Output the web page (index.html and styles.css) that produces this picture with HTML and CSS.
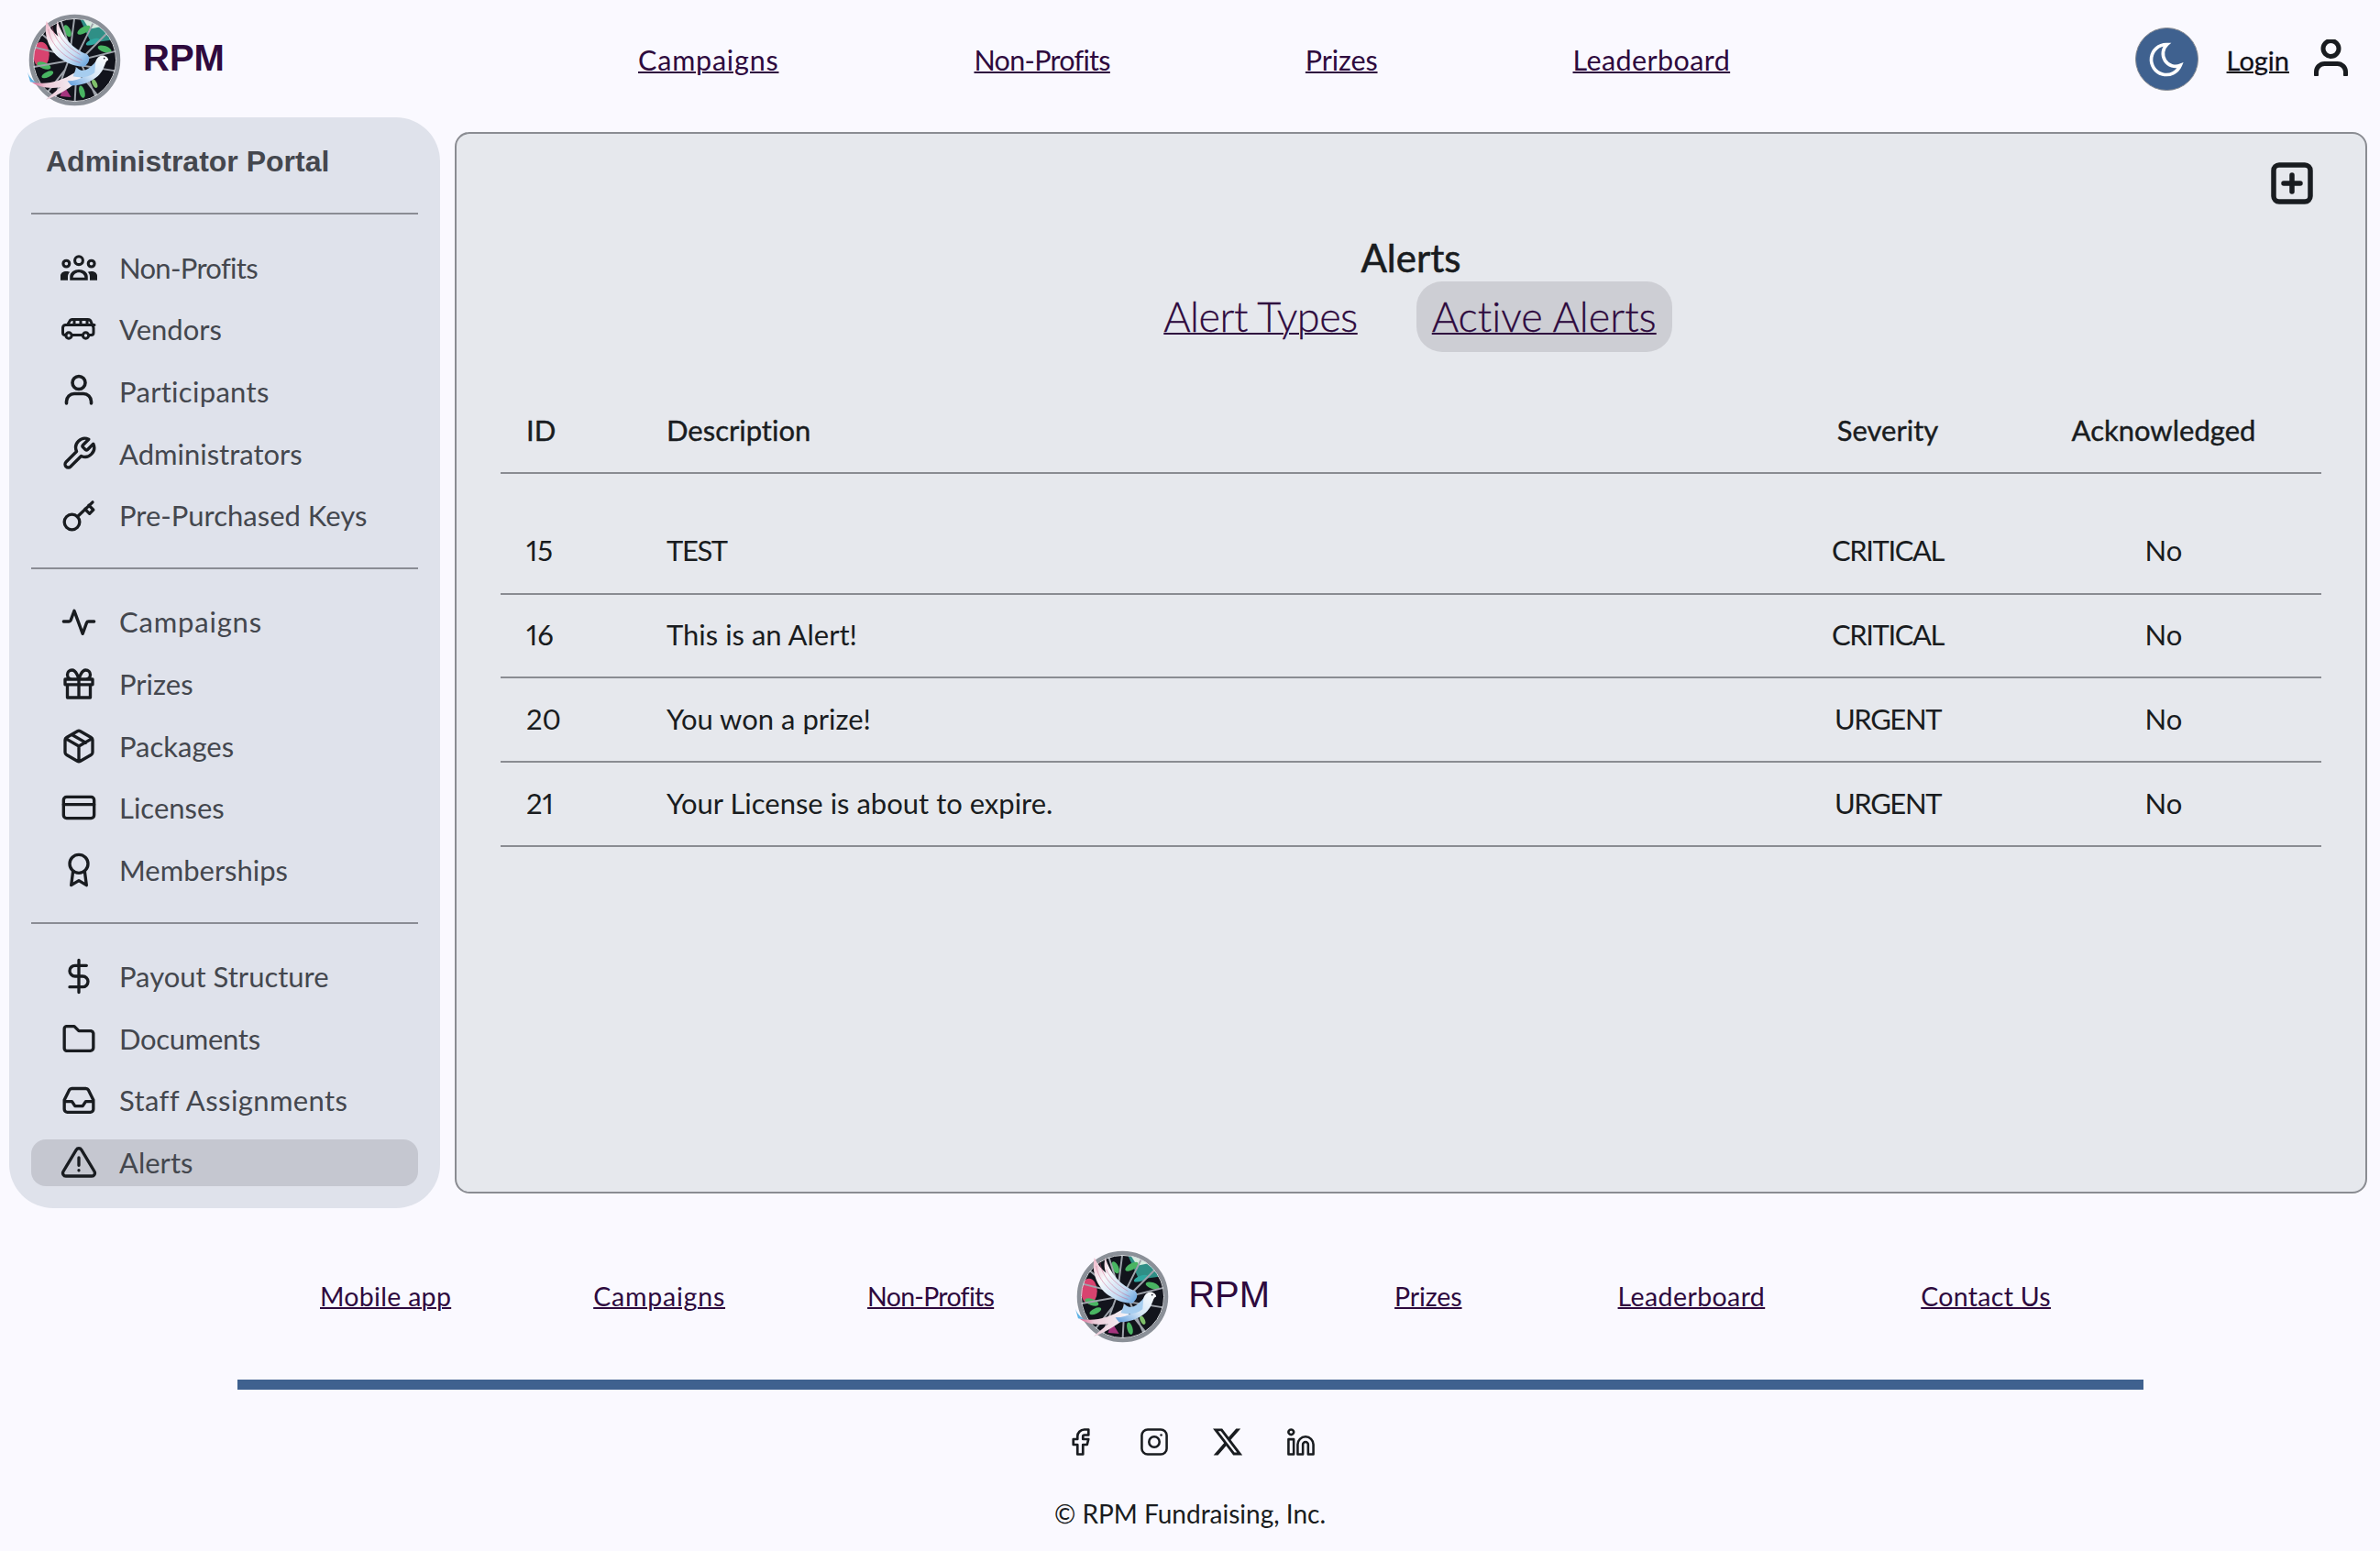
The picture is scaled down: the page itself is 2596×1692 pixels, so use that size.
FILE: index.html
```html
<!DOCTYPE html>
<html lang="en">
<head>
<meta charset="utf-8">
<title>RPM - Alerts</title>
<link rel="stylesheet" href="styles.css">
</head>
<body>
<svg class="defs" aria-hidden="true">
  <defs>
    <linearGradient id="wingGrad" x1="0" y1="0" x2="1" y2="1">
      <stop offset="0" stop-color="#f0b4c6"/>
      <stop offset=".35" stop-color="#f7f9fc"/>
      <stop offset=".7" stop-color="#c4dcf3"/>
      <stop offset="1" stop-color="#5f9fdd"/>
    </linearGradient>
    <linearGradient id="bodyGrad" x1="1" y1="0" x2="0" y2="1">
      <stop offset="0" stop-color="#ffffff"/>
      <stop offset=".55" stop-color="#d5e6f6"/>
      <stop offset="1" stop-color="#5c9bdc"/>
    </linearGradient>
    <linearGradient id="tailGrad" x1="1" y1="0" x2="0" y2="0">
      <stop offset="0" stop-color="#f5f7fa"/>
      <stop offset=".7" stop-color="#eccbd8"/>
      <stop offset="1" stop-color="#d8608f"/>
    </linearGradient>
    <symbol id="logo" viewBox="0 0 104 104">
      <circle cx="52" cy="52" r="49.500" fill="#12141c"/>
      <ellipse cx="15" cy="46" rx="9" ry="14" fill="#d8436f"/>
      <path d="M58 7C74 9 86 17 92 30L70 33Z" fill="#2f8f86"/>
      <path d="M60 5C70 6 78 10 83 15L68 18Z" fill="#d5ecdf"/>
      <g fill="#49b562">
        <ellipse cx="44" cy="20" rx="3.500" ry="7" transform="rotate(-25 44 20)"/>
        <ellipse cx="62" cy="19" rx="8" ry="3.500" transform="rotate(-30 62 19)"/>
        <ellipse cx="85" cy="40" rx="8" ry="3.500" transform="rotate(20 85 40)"/>
        <ellipse cx="72" cy="32" rx="8" ry="3" fill="#2fa7a0" transform="rotate(-20 72 32)"/>
        <ellipse cx="18" cy="58" rx="8" ry="3.500" transform="rotate(20 18 58)"/>
        <ellipse cx="22" cy="68" rx="7" ry="3" transform="rotate(-25 22 68)"/>
        <ellipse cx="60" cy="87" rx="3" ry="7" transform="rotate(-15 60 87)"/>
        <ellipse cx="74" cy="78" rx="2.500" ry="5" fill="#7fc06a" transform="rotate(-25 74 78)"/>
      </g>
      <path d="M40 80L48 93 36 92Z" fill="#a5347e"/>
      <g stroke="#9ea3ab" stroke-width="2" fill="none">
        <path d="M52 3L46 50 30 94M14 22L50 52 4 60M90 20L58 52 98 42M97 64L60 58 76 94M52 100L54 62 78 92M20 90L42 62M8 38L40 46M36 6L48 44M74 8L56 44"/>
      </g>
      <circle cx="52" cy="52" r="48" fill="none" stroke="#8b9098" stroke-width="4.500"/>
      <circle cx="52" cy="52" r="45.500" fill="none" stroke="#d7dade" stroke-width="1"/>
      <path d="M4 76C20 80 36 76 52 66L60 72C48 82 36 90 20 96 26 90 32 86 36 82 24 84 12 82 4 76Z" fill="url(#tailGrad)"/>
      <path d="M-1 62C1 70 5 74 10 77L3 76Z" fill="#5db4e6"/>
      <path d="M21 9C17 26 25 44 39 52 47 57 56 60 63 59 69 54 69 49 66 46 50 40 38 26 33 9 31 16 32 22 34 26 29 22 24 16 21 9Z" fill="url(#wingGrad)"/>
      <path d="M27 14C29 30 44 46 60 52M34 22C38 32 48 40 58 46M23 18C25 34 40 50 58 55" fill="none" stroke="#c9577f" stroke-width=".9" opacity=".5"/>
      <path d="M44 75C60 75 70 66 74 56 76 50 79 46 84 47 87 48 89 50 89 52 86 53 86 56 84 60 80 71 66 80 48 80Z" fill="url(#bodyGrad)"/>
      <path d="M54 60C60 66 66 64 75 54L74 66C66 72 58 72 50 70Z" fill="#a6cdef"/>
      <circle cx="84.500" cy="50" r=".9" fill="#14161f"/>
    </symbol>
  </defs>
</svg>

<header class="topbar">
  <a class="brand" href="#">
    <svg class="logo"><use href="#logo"/></svg>
    <span class="brand-name">RPM</span>
  </a>
  <nav class="topnav">
    <a class="w-campaigns" href="#">Campaigns</a>
    <a class="w-nonprofits" href="#">Non-Profits</a>
    <a class="w-prizes" href="#">Prizes</a>
    <a class="w-leader" href="#">Leaderboard</a>
  </nav>
  <div class="account">
    <button class="theme-btn" type="button" aria-label="Toggle theme">
      <svg class="moon" viewBox="0 0 24 24"><path d="M12 3c.132 0 .263 0 .393 0a7.500 7.500 0 0 0 7.920 12.446a9 9 0 1 1 -8.313 -12.454z"/></svg>
    </button>
    <a class="login" href="#">Login</a>
    <svg class="user-icon" viewBox="0 0 37 40"><circle cx="18.500" cy="10" r="8.500"/><path d="M2.500 38.500v-3a9 9 0 0 1 9-9h14a9 9 0 0 1 9 9v3"/></svg>
  </div>
</header>

<div class="workspace">
  <aside class="sidebar">
    <h2 class="portal-title">Administrator Portal</h2>
    <hr class="side-rule side-rule-first">
    <ul class="side-group">
      <li class="side-item"><svg class="ico" viewBox="0 0 41 40"><g transform="translate(0 6)"><circle cx="20.500" cy="6" r="4.500" class="thick"/><circle cx="6.500" cy="9.500" r="3.500" class="thick"/><circle cx="34.500" cy="9.500" r="3.500" class="thick"/><path class="solid" d="M0 28v-5c0-3 3-5 6.500-5 1.500 0 3 .3 4 .8-1.500 1.500-2.300 3-2.300 5.200v4zM41 28v-5c0-3-3-5-6.500-5-1.500 0-3 .3-4 .8 1.500 1.500 2.300 3 2.300 5.200v4z"/><path class="solid" d="M10.500 28v-4c0-5 5-8 10-8s10 3 10 8v4zM14 25h13c-.3-3-3-5.500-6.500-5.500S14.300 22 14 25z" fill-rule="evenodd"/></g></svg><span class="w-nonprofits">Non-Profits</span></li>
      <li class="side-item"><svg class="ico" viewBox="0 0 40 40"><g transform="translate(0 -2.500)"><path class="van" d="M6 29H5a2.500 2.500 0 0 1-2.500-2.500V21a3 3 0 0 1 3-3h2l3-5a2.500 2.500 0 0 1 2-1h17a4 4 0 0 1 4 3l2.500 6v5.500a2.500 2.500 0 0 1-2.500 2.500h-2M12.500 29H24M7 18h30M15 12.500V18M22 12.500V18M29 12.500V18"/><circle class="van" cx="9" cy="29.500" r="3.200"/><circle class="van" cx="27.500" cy="29.500" r="3.200"/></g></svg><span>Vendors</span></li>
      <li class="side-item"><svg class="ico" viewBox="0 0 40 40"><circle class="line" cx="20" cy="10.500" r="7"/><path class="line" d="M6.500 33v-2a8.500 8.500 0 0 1 8.500-8.500h10a8.500 8.500 0 0 1 8.500 8.500v2"/></svg><span class="w-part">Participants</span></li>
      <li class="side-item"><svg class="ico" viewBox="0 0 24 24"><path class="line2" d="M14.700 6.300a1 1 0 0 0 0 1.400l1.600 1.600a1 1 0 0 0 1.400 0l3.770-3.770a6 6 0 0 1-7.940 7.940l-6.910 6.910a2.120 2.120 0 0 1-3-3l6.910-6.910a6 6 0 0 1 7.940-7.940l-3.760 3.760z"/></svg><span>Administrators</span></li>
      <li class="side-item"><svg class="ico" viewBox="0 0 24 24"><circle class="line2" cx="7.500" cy="16.500" r="5"/><path class="line2" d="M11 13L21 3.500M16 8l3 3 2.500-2.500-3-3"/></svg><span>Pre-Purchased Keys</span></li>
    </ul>
    <hr class="side-rule">
    <ul class="side-group">
      <li class="side-item"><svg class="ico" viewBox="0 0 24 24"><path class="line2" d="M2 12h3.500c.6 0 1-.3 1.200-.8L9 5l5.500 15 2.600-7.200c.2-.5.6-.8 1.200-.8H22"/></svg><span class="w-campaigns">Campaigns</span></li>
      <li class="side-item"><svg class="ico" viewBox="0 0 24 24"><path class="line2" d="M3 9h18v3.500H3zM4.500 12.500V21h15v-8.500M12 9v12M12 9S10.500 3 7.500 3a2.500 2.500 0 0 0 0 6zM12 9s1.500-6 4.500-6a2.500 2.500 0 0 1 0 6z"/></svg><span>Prizes</span></li>
      <li class="side-item"><svg class="ico" viewBox="0 0 24 24"><path class="line2" d="M21 16V8a2 2 0 0 0-1-1.730l-7-4a2 2 0 0 0-2 0l-7 4A2 2 0 0 0 3 8v8a2 2 0 0 0 1 1.730l7 4a2 2 0 0 0 2 0l7-4a2 2 0 0 0 1-1.730zM3.300 7L12 12l8.700-5M12 22V12M7.500 4.500l9 5.200"/></svg><span>Packages</span></li>
      <li class="side-item"><svg class="ico" viewBox="0 0 24 24"><rect class="line2" x="2" y="5" width="20" height="14" rx="2"/><path class="line2" d="M2 10h20"/></svg><span>Licenses</span></li>
      <li class="side-item"><svg class="ico" viewBox="0 0 24 24"><circle class="line2" cx="12" cy="8" r="6"/><path class="line2" d="M8.200 12.700L7 22l5-3 5 3-1.200-9.300"/></svg><span>Memberships</span></li>
    </ul>
    <hr class="side-rule">
    <ul class="side-group">
      <li class="side-item"><svg class="ico" viewBox="0 0 24 24"><path class="line2" d="M12 1.500v21M17 5H9.500a3.500 3.500 0 0 0 0 7h5a3.500 3.500 0 0 1 0 7H6"/></svg><span>Payout Structure</span></li>
      <li class="side-item"><svg class="ico" viewBox="0 0 24 24"><path class="line2" d="M4 4h5l3 3h8a2 2 0 0 1 1.500 1.500V18a2 2 0 0 1-2 2H4a1.500 1.500 0 0 1-1.500-1.500V5.500A1.500 1.500 0 0 1 4 4z"/></svg><span class="w-docs">Documents</span></li>
      <li class="side-item"><svg class="ico" viewBox="0 0 24 24"><path class="line2" d="M2.500 12v6a2 2 0 0 0 2 2h15a2 2 0 0 0 2-2v-6l-3.200-6.500A2 2 0 0 0 16.500 4.500h-9a2 2 0 0 0-1.800 1L2.500 12zM2.500 13h5l2 3h5l2-3h5"/></svg><span class="w-staff">Staff Assignments</span></li>
      <li class="side-item side-item-active"><svg class="ico" viewBox="0 0 24 24"><path class="line2" d="M10.300 3.800L1.800 18a2 2 0 0 0 1.700 3h17a2 2 0 0 0 1.700-3L13.700 3.800a2 2 0 0 0-3.400 0zM12 9v5M12 17.200v.1"/></svg><span>Alerts</span></li>
    </ul>
  </aside>

  <main class="panel">
    <div class="panel-tools">
      <svg class="add-icon" viewBox="0 0 46 46"><rect x="3" y="3" width="40" height="40" rx="6"/><path d="M14 23h18M23 14v18"/></svg>
    </div>
    <h1 class="panel-title">Alerts</h1>
    <div class="tabs">
      <a class="tab tab-types" href="#">Alert Types</a>
      <a class="tab tab-active" href="#">Active Alerts</a>
    </div>
    <table class="alerts">
      <colgroup><col class="col-id"><col class="col-desc"><col class="col-sev"><col class="col-ack"></colgroup>
      <thead>
        <tr><th>ID</th><th>Description</th><th class="mid">Severity</th><th class="mid">Acknowledged</th></tr>
      </thead>
      <tbody>
        <tr class="spacer"><td colspan="4"></td></tr>
        <tr><td>15</td><td class="caps">TEST</td><td class="mid caps">CRITICAL</td><td class="mid">No</td></tr>
        <tr><td>16</td><td>This is an Alert!</td><td class="mid caps">CRITICAL</td><td class="mid">No</td></tr>
        <tr><td>20</td><td>You won a prize!</td><td class="mid caps">URGENT</td><td class="mid">No</td></tr>
        <tr><td>21</td><td>Your License is about to expire.</td><td class="mid caps">URGENT</td><td class="mid">No</td></tr>
      </tbody>
    </table>
  </main>
</div>

<footer class="footer">
  <nav class="footnav">
    <a href="#">Mobile app</a>
    <a class="w-campaigns" href="#">Campaigns</a>
    <a class="w-nonprofits" href="#">Non-Profits</a>
    <a class="foot-brand" href="#">
      <svg class="logo"><use href="#logo"/></svg>
      <span class="foot-name">RPM</span>
    </a>
    <a class="foot-prizes w-prizes" href="#">Prizes</a>
    <a class="foot-wide w-leader" href="#">Leaderboard</a>
    <a class="foot-wide" href="#">Contact Us</a>
  </nav>
  <div class="foot-bar"></div>
  <div class="socials">
    <svg class="social" viewBox="2.500 2 20 20"><path d="M7 10v4h3v7h4v-7h3l1-4h-4V8a1 1 0 0 1 1-1h3V3h-3a5 5 0 0 0-5 5v2H7"/></svg>
    <svg class="social" viewBox="1.500 1.500 21 21"><rect x="2.500" y="2.500" width="19" height="19" rx="4.500"/><circle cx="12" cy="12" r="4"/><path d="M17.300 6.700v.01"/></svg>
    <svg class="social social-x" viewBox="1.250 1.250 21.500 21.500"><path d="M18.244 2.250h3.308l-7.227 8.260 8.502 11.240H16.170l-5.214-6.817L4.990 21.750H1.680l7.730-8.835L1.254 2.250H8.080l4.713 6.231zm-1.161 17.520h1.833L7.084 4.126H5.117z"/></svg>
    <svg class="social" viewBox="1.500 1.500 21 21"><path d="M2.500 10h4v11.500h-4zM4.500 2.500a2 2 0 1 1-.01 0zM9.500 21.500V14a6 6 0 0 1 12 0v7.500h-4V14a2 2 0 0 0-4 0v7.500z"/></svg>
  </div>
  <p class="copyright">© RPM Fundraising, Inc.</p>
</footer>
</body>
</html>
```

FILE: styles.css
```css
* { box-sizing: border-box; }
html, body { margin: 0; padding: 0; }
body {
  background: #faf9ff;
  color: #191c20;
  font-family: "Lato", "Noto Sans", sans-serif;
  font-variant-ligatures: none;
  font-variant-numeric: proportional-nums;
  width: 2596px;
  height: 1692px;
  overflow: hidden;
}
.defs { position: absolute; width: 0; height: 0; }
a { color: #2e0a3e; text-decoration-thickness: 1.500px; }

.w-campaigns { letter-spacing: .8px; }
.w-nonprofits { letter-spacing: -.7px; }
.w-prizes { letter-spacing: -.1px; }
.w-leader { letter-spacing: .4px; }
.w-docs { letter-spacing: -.3px; }
.w-staff { letter-spacing: .4px; }
.w-part { letter-spacing: .3px; }

.topbar {
  display: flex;
  align-items: flex-start;
  height: 128px;
}
.brand {
  display: flex;
  align-items: center;
  gap: 23px;
  margin: 14px 0 0 30px;
  text-decoration: none;
  width: 666px;
}
.logo { width: 103px; height: 103px; flex: none; }
.brand-name {
  font: bold 40px "Liberation Sans", sans-serif;
  color: #2e0a3e;
  margin-top: -4px;
}
.topnav {
  display: flex;
  gap: 213px;
  margin-top: 44px;
  font-size: 30.500px;
  line-height: 42px;
}
.account {
  margin-left: auto;
  display: flex;
  align-items: center;
  margin-top: 30px;
  padding-right: 35px;
}
.theme-btn {
  width: 69px;
  height: 69px;
  border-radius: 50%;
  border: 1px solid #8a8d94;
  background: #3f618f;
  padding: 0;
  display: flex;
  align-items: center;
  justify-content: center;
}
.moon { width: 44px; height: 44px; fill: none; stroke: #fff; stroke-width: 2; }
.login {
  font-size: 29px;
  color: #101018;
  -webkit-text-stroke: .3px #101018;
  margin: 2px 27px 0 31px;
}
.user-icon { width: 37px; height: 40px; fill: none; stroke: #191c20; stroke-width: 5; margin-top: -4px; stroke-linecap: round; }

.workspace {
  display: flex;
  gap: 16px;
  padding: 0 16px 0 10px;
  height: 1190px;
}
.sidebar {
  width: 470px;
  flex: none;
  background: #dfe2eb;
  border-radius: 48px;
  padding: 28px 24px 24px;
  color: #44474e;
}
.portal-title {
  margin: 0;
  padding-left: 16px;
  font: bold 32px/40px "Liberation Sans", sans-serif;
  color: #44474e;
}
.side-rule {
  margin: 31px 0 32px;
  border: 0;
  border-top: 2px solid #8a8c94;
}
.side-rule-first { margin-top: 36px; }
.side-group {
  list-style: none;
  margin: 0;
  padding: 0;
  display: flex;
  flex-direction: column;
  gap: 16.700px;
}
.side-item {
  display: flex;
  align-items: center;
  gap: 24px;
  height: 51px;
  padding-left: 32px;
  font-size: 31px;
  border-radius: 16px;
}
.side-item-active { background: #c5c7d0; }
.ico { width: 40px; height: 40px; flex: none; overflow: visible; }
.line, .van, .line2, .thick { fill: none; stroke: #191c20; stroke-linecap: round; stroke-linejoin: round; }
.line { stroke-width: 3.600; }
.van { stroke-width: 3; }
.thick { stroke-width: 3.200; }
.line2 { stroke-width: 2; }
.solid { fill: #191c20; }

.panel {
  flex: 1;
  margin: 16px 0 16px;
  background: #e6e8ed;
  border: 2px solid #8a8c92;
  border-radius: 16px;
  padding: 31px 48px 0;
}
.panel-tools {
  display: flex;
  justify-content: flex-end;
  height: 46px;
  margin-bottom: 35px;
}
.add-icon { width: 46px; height: 46px; fill: none; stroke: #191c20; stroke-width: 5.500; stroke-linecap: round; margin-right: 9px; }
.panel-title {
  margin: 0 0 2px;
  text-align: center;
  font-size: 42px;
  line-height: 47px;
  font-weight: 400;
  -webkit-text-stroke: .6px #191c20;
}
.tabs {
  display: flex;
  justify-content: center;
  gap: 47px;
  height: 77px;
  padding-right: 2px;
}
.tab {
  font-size: 45px;
  font-weight: 300;
  -webkit-text-stroke: .3px #2e0a3e;
  line-height: 76px;
  height: 77px;
  padding: 0 17px;
  border-radius: 28px;
}
.tab-types { letter-spacing: -.5px; }
.tab-active { background: #cdced4; }
.alerts {
  width: 1986px;
  margin-top: 40px;
  border-collapse: collapse;
  table-layout: fixed;
  font-size: 31px;
}
.col-id { width: 153px; }
.col-sev { width: 258px; }
.col-ack { width: 344px; }
.alerts th {
  height: 92px;
  text-align: left;
  padding: 0 0 2px 28px;
  font-weight: 400;
  -webkit-text-stroke: .4px #191c20;
  border-bottom: 2px solid #8a8c92;
}
.alerts td {
  height: 91.670px;
  padding: 0 0 2px 28px;
  border-bottom: 2px solid #8a8c92;
}
.alerts .caps { letter-spacing: -1.400px; }
.alerts .mid { text-align: center; padding-left: 0; }
.alerts .spacer td { height: 40px; border-bottom: 0; padding: 0; }

.footer { padding-top: 45px; }
.footnav {
  display: flex;
  align-items: center;
  height: 102px;
  padding-left: 349px;
  gap: 155px;
  font-size: 28.500px;
  letter-spacing: .3px;
}
.foot-brand {
  display: flex;
  align-items: center;
  gap: 20px;
  margin-left: -66px;
  text-decoration: none;
  letter-spacing: 0;
}
.foot-name {
  font: 40px "Liberation Sans", sans-serif;
  color: #2e0a3e;
  margin-top: -4px;
}
.foot-prizes { margin-left: -19px; }
.foot-wide { margin-left: 15px; }
.foot-bar {
  width: 2079px;
  height: 11px;
  margin: 40px auto 0;
  background: #3f618f;
}
.socials {
  display: flex;
  justify-content: center;
  gap: 50px;
  margin-top: 42px;
  height: 30px;
  padding-left: 2px;
}
.social { width: 30px; height: 30px; fill: none; stroke: #191c20; stroke-width: 1.800; stroke-linejoin: round; stroke-linecap: round; }
.social-x { fill: #191c20; stroke: none; width: 32px; height: 32px; margin: -1px; }
.copyright {
  margin: 47px 0 0;
  text-align: center;
  font-size: 28px;
  line-height: 32px;
}
```
